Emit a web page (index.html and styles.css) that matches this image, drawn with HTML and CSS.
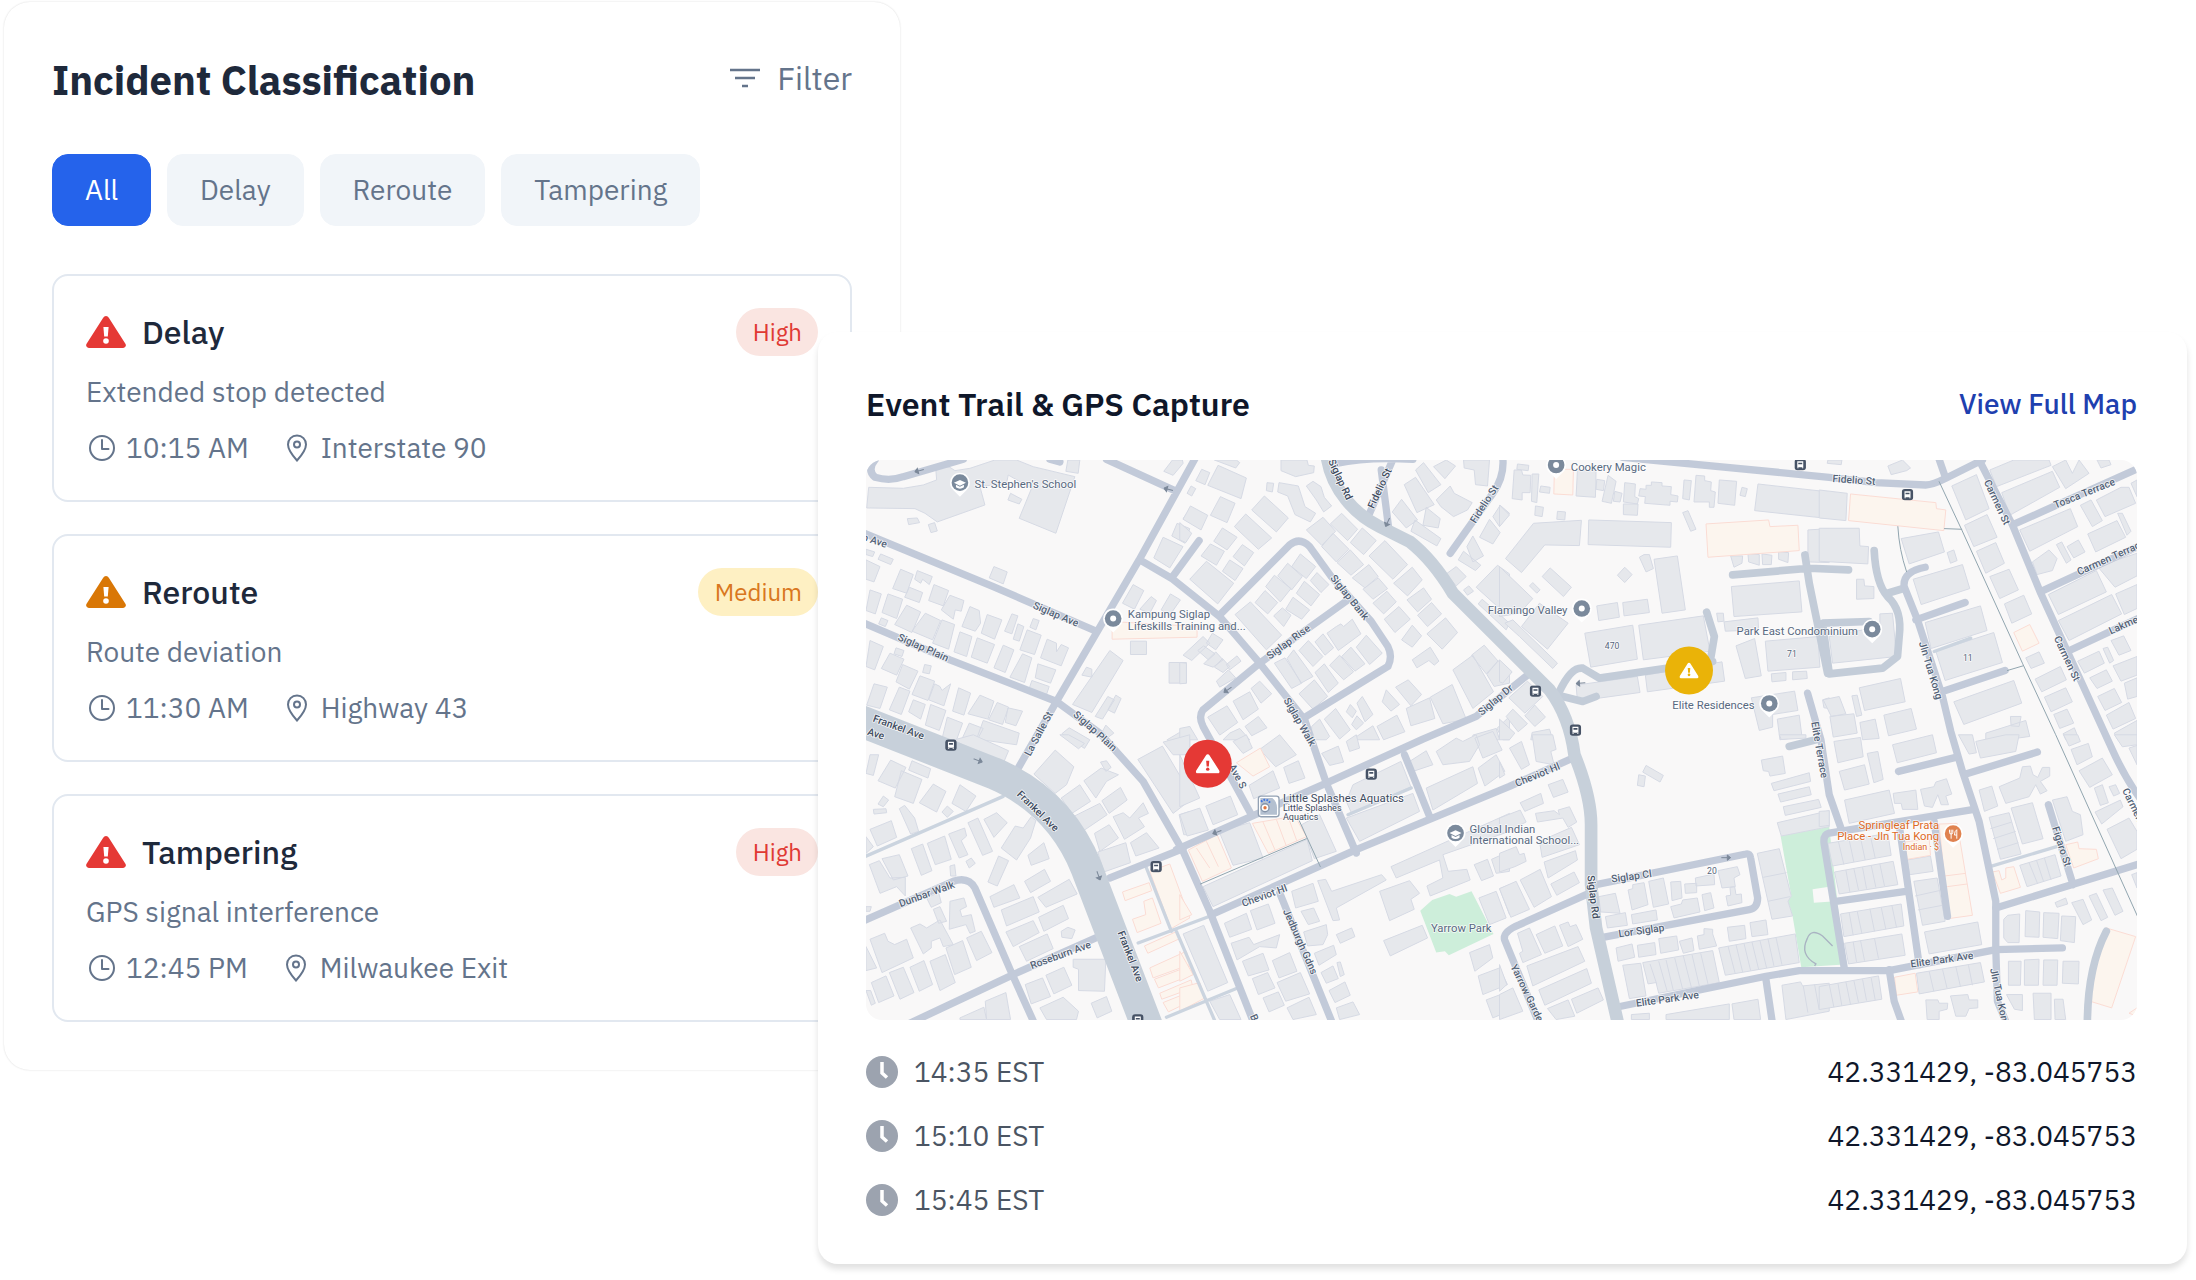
FILE: index.html
```html
<!DOCTYPE html>
<html lang="en">
<head>
    <meta charset="utf-8">
    <title>Incident Classification</title>
    <link rel="stylesheet" href="styles.css">
</head>
<body>
    <!-- shared icons -->
    <svg class="sprite" aria-hidden="true">
        <symbol id="warn" viewBox="0 0 40 32">
            <path fill="currentColor" d="M17.2 1.7a3.2 3.2 0 0 1 5.6 0l16.6 26a2.8 2.8 0 0 1-2.400 4.300H3a2.800 2.800 0 0 1-2.400-4.300z"/>
            <path class="warn-mark" d="M17.400 11h5.200l-.8 9.500h-3.600z"/>
            <circle class="warn-mark" cx="20" cy="25" r="2.800"/>
        </symbol>
        <symbol id="clock" viewBox="0 0 32 32">
            <circle cx="16" cy="16" r="12" fill="none" stroke="currentColor" stroke-width="2"/>
            <path d="M16 8v9h6.500" fill="none" stroke="currentColor" stroke-width="2" stroke-linecap="round" stroke-linejoin="round"/>
        </symbol>
        <symbol id="place" viewBox="0 0 32 32">
            <path d="M16 3.500c-5.200 0-9 4-9 9C7 18.500 16 28.500 16 28.500s9-10 9-16c0-5-3.800-9-9-9z" fill="none" stroke="currentColor" stroke-width="2"/>
            <circle cx="16" cy="12.500" r="3" fill="none" stroke="currentColor" stroke-width="2"/>
        </symbol>
        <symbol id="clock-solid" viewBox="0 0 32 32">
            <circle cx="16" cy="16" r="16" fill="currentColor"/>
            <path d="M16 6v11l5 4.500" fill="none" stroke="#fff" stroke-width="3.500"/>
        </symbol>
        <symbol id="pin" viewBox="-36 -36 72 84">
            <path d="M0 42 L-18 24A30 30 0 1 1 18 24z" fill="#fff"/>
            <circle r="25" fill="currentColor"/>
        </symbol>
        <symbol id="bus" viewBox="-18 -18 36 36">
            <rect x="-17" y="-17" width="34" height="34" rx="9" fill="#475366"/>
            <path d="M-9 -10h18v18h-18z" fill="#fff"/>
            <path d="M-6 -6h12v5h-12zM-9 8h4v4h-4zM5 8h4v4h-4z" fill="#475366"/>
            <path d="M-9 8h4v3h-4zM5 8h4v3h-4z" fill="#fff"/>
        </symbol>
        <symbol id="arrow" viewBox="-15 -12 30 24">
            <path d="M-14 0H4V-8L14 0 4 8V0" fill="#7b8899" stroke="#7b8899" stroke-width="3"/>
        </symbol>
    </svg>

    <main class="board">
        <section class="panel incidents">
            <header class="incidents-header">
                <h1>Incident Classification</h1>
                <button type="button" class="filter">
                    <svg class="icon" viewBox="0 0 32 32" aria-hidden="true"><path d="M1 8h30M6 16h20M13 24h6" fill="none" stroke="currentColor" stroke-width="2.500"/></svg>
                    Filter
                </button>
            </header>

            <nav class="tabs">
                <button type="button" class="tab active">All</button>
                <button type="button" class="tab">Delay</button>
                <button type="button" class="tab">Reroute</button>
                <button type="button" class="tab">Tampering</button>
            </nav>

            <div class="incident-list">
                <article class="incident">
                    <div class="incident-top">
                        <svg class="warn high-icon" aria-hidden="true"><use href="#warn"/></svg>
                        <h2>Delay</h2>
                        <span class="badge high">High</span>
                    </div>
                    <p>Extended stop detected</p>
                    <div class="meta">
                        <span><svg class="icon" aria-hidden="true"><use href="#clock"/></svg>10:15 AM</span>
                        <span><svg class="icon" aria-hidden="true"><use href="#place"/></svg>Interstate 90</span>
                    </div>
                </article>
                <article class="incident">
                    <div class="incident-top">
                        <svg class="warn medium-icon" aria-hidden="true"><use href="#warn"/></svg>
                        <h2>Reroute</h2>
                        <span class="badge medium">Medium</span>
                    </div>
                    <p>Route deviation</p>
                    <div class="meta">
                        <span><svg class="icon" aria-hidden="true"><use href="#clock"/></svg>11:30 AM</span>
                        <span><svg class="icon" aria-hidden="true"><use href="#place"/></svg>Highway 43</span>
                    </div>
                </article>
                <article class="incident">
                    <div class="incident-top">
                        <svg class="warn high-icon" aria-hidden="true"><use href="#warn"/></svg>
                        <h2>Tampering</h2>
                        <span class="badge high">High</span>
                    </div>
                    <p>GPS signal interference</p>
                    <div class="meta">
                        <span><svg class="icon" aria-hidden="true"><use href="#clock"/></svg>12:45 PM</span>
                        <span><svg class="icon" aria-hidden="true"><use href="#place"/></svg>Milwaukee Exit</span>
                    </div>
                </article>
            </div>
        </section>

        <section class="panel trail">
            <header class="trail-header">
                <h2>Event Trail &amp; GPS Capture</h2>
                <a href="#map">View Full Map</a>
            </header>

            <svg id="map" class="map" viewBox="0 0 3816 1680" role="img" aria-label="Map of the event trail">
                <!-- parks -->
                <g class="park">
                    <path transform="translate(942 825)" d="M722 528 758 496 810 478 830 486 876 470 942 598 808 662 796 650 770 654z"/>
                    <path transform="translate(1902 825)" d="M844 304 990 276 1035 690 906 698 880 545 866 500 876 484z"/>
                    <path class="ground" transform="translate(1902 825)" d="M940 464 1000 455 1010 500 944 504z"/>
                    <path class="trail-line" transform="translate(1902 825)" d="M1000 634 970 604Q935 580 924 612Q900 660 950 688L946 694"/>
                </g>

                <!-- buildings, one path per map tile -->
                <g class="building">
                    <path transform="translate(-18 -30)" d="M26 112 130 115 190 105 230 90 228 62 245 48 270 52 285 62 330 55 405 30 470 30 520 50 645 80 588 250 478 205 515 115 445 75 440 100 360 110 375 165 232 216 195 190 165 176 20 174zM142 206 172 204 179 218 146 224zM205 224 224 218 232 243 213 248zM452 130 486 148 478 162 444 150zM624 30 660 30 655 70 618 64zM402 350 442 366 430 402 388 384zM122 358 160 374 140 430 98 416zM172 362 217 380 208 404 188 388 182 400 164 388zM148 412 188 428 178 458 134 442zM222 404 266 422 250 468 206 452zM270 436 312 452 304 484 286 480 280 508 244 480zM84 432 128 448 110 506 66 488zM140 466 182 486 156 548 104 524zM196 490 242 512 218 570 156 544zM246 510 284 524 266 598 218 580zM330 470 358 482 362 520 346 544 306 530zM382 494 426 510 404 568 364 550zM456 492 474 498 456 552 434 544zM474 522 492 530 478 574 460 568zM300 546 336 560 320 620 282 606zM352 564 404 584 382 640 334 622zM430 586 462 600 436 668 402 654zM488 612 516 624 494 698 450 682zM502 540 544 556 524 614 480 600zM520 506 538 512 528 540 510 532zM562 568 590 580 590 606 604 584 626 594 604 648 542 624zM534 642 588 660 572 700 526 684zM516 692 568 710 560 734 508 716zM30 572 70 590 44 660 18 650zM90 610 132 628 110 676 64 656zM108 594 132 602 126 620 102 612zM128 644 174 664 148 718 108 696zM194 644 214 648 208 672 188 668zM180 678 224 694 204 752 156 734zM224 702 240 710 246 722 272 702 252 768 206 750zM118 712 150 724 124 794 88 780zM42 702 82 712 60 776 20 766zM296 714 332 730 312 796 278 784zM360 736 402 754 384 808 324 792zM412 758 446 772 428 824 386 810zM444 774 488 784 468 828 436 818zM160 750 196 764 182 808 146 786zM212 764 258 782 238 842 196 826zM262 802 308 820 290 870 246 868zM370 812 478 850 470 885 350 868zM328 820 370 836 352 870 306 868zM18 298 44 306 38 320 18 314zM62 312 100 328 92 344 54 328zM18 330 60 350 42 396 18 388zM30 420 64 432 46 492 18 482zM64 504 84 512 76 530 56 522zM952 220 990 236 976 280 936 258zM910 262 970 290 930 354 882 324zM990 178 970 206 990 216zM820 404 852 422 824 478 788 460zM874 440 890 452 870 490 840 478zM932 432 962 450 930 496 904 480zM938 30 968 30 970 40 940 76 912 64zM812 574 860 574 860 614 812 614zM928 638 980 638 980 700 928 700zM750 602 790 632 696 788 638 764zM680 652 696 658 696 682 666 676zM744 740 764 750 728 808 706 800zM768 736 784 746 764 790 744 780zM628 834 690 870 674 896 606 852zM990 830 922 870 940 890 990 890zM738 826 762 850 746 862 726 848z"/>
                    <path transform="translate(942 -30)" d="M115 46 200 84 184 146 84 106zM66 58 90 68 76 104 48 92zM34 108 48 116 36 138 22 130zM104 30 170 30 180 38 168 54zM304 30 382 30 386 46 404 48 402 68 348 80 304 62zM262 98 282 100 278 126 260 122zM122 140 166 160 142 218 92 196zM32 168 84 196 64 240 10 208zM254 138 326 204 290 246 216 180zM198 192 276 264 236 298 164 230zM298 98 356 108 376 170 408 190 392 216 346 194 324 138 294 126zM400 94 424 110 434 142 456 168 432 186 410 150 380 108zM430 202 468 244 426 286 380 240zM486 190 534 238 504 272 452 222zM548 234 590 272 552 314 512 278zM460 250 508 298 470 336 426 290zM512 300 552 344 514 376 472 338zM616 272 684 344 640 388 568 318zM568 344 596 380 556 414 518 384zM596 384 624 416 580 448 550 418zM698 352 728 390 684 438 642 400zM622 424 650 456 612 492 580 460zM732 414 756 448 714 486 682 450zM658 470 692 508 646 548 614 508zM756 458 786 492 744 530 714 496zM798 504 834 548 788 598 742 552zM698 526 726 558 698 592 666 570zM752 592 778 634 764 646 748 632 712 654 698 630zM128 234 172 262 142 300 102 274zM92 282 134 304 110 346 64 318zM188 284 222 308 194 348 160 320zM150 330 190 356 166 392 128 364zM80 334 162 400 114 462 30 388zM0 218 36 250 18 278 0 270zM362 312 408 350 380 386 336 350zM324 340 368 380 336 420 294 378zM284 376 334 416 302 456 258 410zM412 368 448 404 424 428 392 392zM374 394 420 434 394 468 350 430zM256 422 294 458 264 492 226 458zM340 442 390 480 366 508 318 478zM308 474 334 496 312 530 282 498zM212 456 306 556 260 600 166 494zM518 508 544 552 476 602 442 550 470 530 484 522 492 530zM430 552 462 594 436 616 406 576zM386 572 430 620 400 650 358 602zM560 556 608 610 570 644 530 592zM514 592 556 642 526 664 486 620zM342 600 400 680 364 700 322 626zM316 624 366 700 336 716 284 640zM480 616 522 666 492 690 450 646zM434 642 476 700 446 728 406 668zM404 690 444 740 400 778 358 732zM70 560 90 580 36 632 10 616zM98 550 130 570 108 600 80 580zM72 588 106 612 86 630 54 602zM108 606 130 630 100 652 72 642zM128 626 150 650 130 668 104 652zM172 618 184 634 150 660 140 644zM146 660 168 684 120 712 110 694zM240 694 276 732 244 760 214 716zM210 726 236 778 190 810 160 754zM142 768 174 818 120 856 84 802zM236 800 262 834 216 858 196 830zM0 638 20 640 20 700 0 702zM0 836 30 830 54 870 0 870zM150 850 180 836 210 870 130 870zM620 720 660 764 634 784 608 756zM686 690 726 734 694 768 648 712zM750 744 766 806 694 828 680 776zM818 704 860 808 790 822 752 742zM880 616 942 726 880 776 820 660zM914 586 956 634 920 672 876 616zM956 632 990 670 990 700 944 710 922 674zM548 740 580 794 556 816 532 760zM512 764 530 784 518 804 500 786zM532 798 552 820 530 840 516 824zM468 776 512 840 480 868 434 808zM420 808 450 860 440 870 396 870 396 830zM580 828 600 870 516 870zM652 796 676 846 612 870 592 830zM952 836 990 800 990 870 970 870zM880 856 950 836 960 870 880 870zM732 38 784 104 746 128 708 60zM708 82 764 164 712 188 674 104zM666 148 714 210 680 234 638 186zM800 30 828 48 796 86 762 50zM852 30 930 30 924 108 888 104 884 60 854 54zM812 108 824 130 878 158 864 180 822 200 784 170 770 150zM740 172 782 206 776 234 730 226zM706 210 784 266 772 288 694 244zM962 166 990 190 960 230 940 200zM930 208 962 248 940 282 900 262zM880 258 912 318 880 336 862 290zM852 304 904 346 888 362 836 330zM830 350 860 380 830 408 800 372zM868 408 882 424 864 436 852 420zM954 346 990 372 990 460 954 470 890 412zM908 448 990 520 980 540 896 462z"/>
                    <path transform="translate(1902 -30)" d="M44 60 66 60 70 75 94 76 92 128 68 128 68 150 38 146zM54 42 88 46 86 62 52 58zM98 72 118 72 112 158 96 154zM124 108 152 112 150 130 120 126zM234 60 290 62 288 142 230 138zM292 88 316 92 312 122 290 118zM326 76 350 94 336 160 308 154zM346 124 368 130 362 156 342 154zM376 98 408 102 406 140 418 146 414 162 372 156zM372 162 416 162 414 196 372 194zM108 168 132 172 128 200 106 196zM174 184 198 186 196 210 172 208zM0 165 30 195 0 230zM422 116 440 118 440 106 456 106 456 96 488 98 488 108 516 110 514 134 536 138 534 156 512 154 512 166 436 160 438 140 418 138zM554 90 576 92 570 150 550 146zM590 76 616 78 616 92 636 96 634 122 648 126 644 172 630 172 630 156 584 156zM660 90 712 94 706 166 656 160zM728 112 744 116 738 140 722 136zM776 102 990 126 990 206 766 182zM102 220 246 211 240 287 136 285 66 368 18 326zM268 210 516 218 514 292 266 284zM566 182 590 238 574 244 550 188zM926 240 990 236 990 338 926 336zM0 350 100 446 60 490 0 500zM434 314 450 314 462 356 440 366 420 322zM376 352 398 374 376 398 354 376zM464 328 534 318 558 480 488 490zM152 354 216 412 192 440 128 380zM100 398 122 420 112 430 90 408zM292 468 354 458 360 502 298 512zM370 458 444 448 450 488 374 498zM120 460 206 520 144 598 66 530zM16 520 40 510 174 640 160 656 60 560zM256 550 400 526 414 628 274 652zM418 526 612 498 632 604 432 630zM652 490 672 490 674 514 656 516zM674 516 776 504 778 540 678 544zM696 410 900 393 908 486 704 500zM230 706 414 680 422 728 234 754zM438 676 668 636 676 694 444 726zM710 588 766 566 786 678 738 686zM798 574 956 560 962 652 806 664zM816 672 860 668 860 692 818 696zM880 666 922 664 924 686 880 690zM756 744 886 724 896 782 820 794 820 832 780 842zM834 808 900 796 908 860 842 870zM970 750 990 744 990 776 974 774zM84 694 130 740 76 790 28 744zM0 630 38 666 10 700 0 696zM106 766 138 802 106 830 76 798zM40 778 84 822 56 846 20 800zM0 808 46 850 30 870 0 870zM98 848 150 838 160 870 94 870zM694 318 730 318 728 340 704 352zM746 312 780 314 780 346 748 336zM788 312 818 316 816 344 790 344zM838 306 868 308 866 338 838 328z"/>
                    <path transform="translate(2862 -30)" d="M26 30 68 30 66 44 24 40zM250 30 274 54 262 62 216 74 206 48zM0 120 84 130 80 212 0 204zM0 235 120 235 122 288 148 290 146 342 0 334zM112 388 134 388 136 408 164 410 164 446 112 448zM246 266 358 246 376 306 270 342zM384 308 404 300 414 332 394 340zM282 388 430 344 452 416 306 464zM318 518 484 468 504 542 336 596zM350 604 524 548 550 638 378 692zM404 756 584 692 608 760 434 824zM182 492 220 490 232 620 40 640 30 560 182 530zM120 714 244 686 258 756 136 782zM194 796 276 776 292 838 208 858zM12 750 60 740 80 792 36 800zM98 738 114 736 128 796 112 800zM32 800 104 792 114 850 42 862zM122 818 168 808 180 866 130 870zM398 108 472 74 510 176 440 210zM436 226 504 194 534 262 464 290zM472 304 530 278 556 340 500 370zM512 380 570 358 598 420 542 446zM556 462 614 436 638 492 578 520zM620 624 660 606 676 640 636 656zM648 688 724 650 742 690 668 726zM676 742 740 714 760 756 696 786zM704 794 744 778 764 820 722 836zM732 852 766 834 780 870 740 870zM512 60 584 30 690 30 696 46 532 110zM548 128 700 64 722 112 572 196zM700 50 740 30 760 70 780 30 810 70 740 116zM834 30 870 30 876 44 846 54zM602 240 754 176 776 230 632 304zM784 166 816 150 850 212 820 230zM832 150 906 112 930 112 950 160 858 200zM806 252 894 212 920 262 830 306zM954 90 936 100 954 140zM896 190 910 190 936 244 924 256zM640 336 690 300 714 326 700 362 654 374zM712 284 728 276 756 330 742 340zM744 290 778 270 798 306 764 324zM688 434 832 362 862 426 718 494zM836 350 954 310 954 378 888 412zM718 512 878 434 908 492 750 572zM890 432 954 404 954 476 916 494zM776 634 840 604 856 640 796 670zM852 596 866 592 884 632 872 640zM876 572 914 558 936 602 900 616zM812 684 862 660 880 694 834 716zM882 648 954 620 954 676 906 694zM836 740 886 716 908 758 858 782zM916 700 954 684 954 740 926 748zM862 796 930 758 950 806 882 838zM886 850 954 812 954 870 896 870zM574 800 606 800 600 830 576 828zM500 850 620 812 632 860 560 870 500 870z"/>
                    <path transform="translate(-18 825)" d="M30 60 56 60 40 122 18 116zM92 76 138 98 106 160 54 138zM156 78 212 102 204 130 146 106zM124 108 186 134 160 206 104 186zM220 148 258 170 230 232 178 204zM300 150 348 184 318 230 276 206zM70 184 86 196 70 216 54 208zM40 224 78 222 80 234 42 238zM134 212 164 250 176 290 152 298 118 222zM262 214 280 230 262 248 246 232zM30 284 94 258 110 308 52 334zM18 306 40 336 18 356zM154 342 188 328 216 408 184 422zM202 326 254 304 274 374 226 390zM266 298 314 280 320 304 304 318 324 360 298 370zM324 264 354 250 398 350 368 362zM372 254 410 234 442 264 402 308zM514 246 528 258 512 310 470 376 424 340 466 274 490 280zM504 362 552 324 568 372 514 392zM416 364 446 378 412 454 384 442zM318 380 334 370 346 386 328 400zM28 390 58 378 90 430 136 428 136 484 110 456 60 476zM66 372 118 360 144 424 100 436zM270 394 284 390 288 424 272 424zM494 440 554 404 572 440 512 474zM390 486 462 450 480 490 402 518zM534 488 628 434 652 478 558 518zM424 526 520 486 538 532 440 574zM536 548 610 512 626 552 552 590zM438 592 520 558 538 594 460 636zM478 636 562 598 580 642 500 680zM604 590 624 578 646 586 636 612 606 608zM640 674 738 674 734 770 656 768 656 704 640 698zM496 750 548 730 572 786 514 808zM558 722 612 698 636 752 582 778zM694 806 740 786 756 830 712 850zM540 820 610 788 656 830 650 855 560 855zM300 850 372 818 380 855 300 855zM376 800 438 774 452 855 380 855zM152 580 180 568 200 580 240 556 280 630 250 636 240 610 214 620 214 640 190 658zM220 524 240 516 260 560 236 566zM270 500 312 490 320 516 300 526 306 546 334 540 346 590 330 596 318 570 268 584zM200 490 236 474 244 504 214 518zM30 614 74 596 84 620 104 630 140 614 160 670 66 714zM18 636 50 700 18 708zM320 610 364 590 396 654 350 678zM258 640 308 618 334 698 284 720zM210 680 256 660 286 744 240 768zM150 698 192 678 218 750 178 770zM88 714 130 698 162 774 120 794zM34 744 78 724 102 784 56 804zM18 768 32 768 46 806 34 812zM586 46 642 96 620 150 586 176 522 118zM604 190 660 150 692 200 636 236zM672 138 724 100 776 120 740 140 708 190zM722 82 740 78 754 98 738 110zM726 198 782 158 802 196 748 236zM640 246 720 206 742 240 668 290zM760 246 790 234 810 250 850 204 866 236 836 250 854 276 794 314zM704 296 748 270 776 310 720 350zM812 324 860 294 898 340 828 364zM714 352 798 324 812 384 732 412zM834 74 908 34 1000 190 940 236zM910 22 990 0 990 60 940 60zM600 0 626 0 674 26 656 42zM958 240 990 230 990 300 972 300zM340 0 446 48 430 86 280 16zM18 516 34 516 30 530 18 530z"/>
                    <path transform="translate(942 825)" d="M240 44 300 0 350 60 288 96zM312 98 356 78 376 130 328 146zM208 152 280 108 300 160 222 192zM78 214 152 184 174 240 100 270zM0 240 60 220 86 286 22 304zM0 60 60 190 0 216zM160 20 200 0 218 40 190 56zM426 56 476 34 492 82 450 92zM500 20 530 0 540 40 510 50zM520 150 664 80 694 156 516 236 500 200zM500 250 700 176 720 230 540 320zM366 270 420 240 470 350 404 372zM118 290 210 264 250 370 160 392zM70 456 382 314 398 378 100 516zM634 396 990 236 990 290 790 360 806 410 862 404 872 436 752 484 742 454 790 430 780 376 650 430zM336 470 400 446 416 500 348 520zM414 438 438 434 456 470 606 420 620 436 470 520 480 556 460 558zM600 470 690 438 720 476 694 494 704 524 630 558zM134 566 200 536 216 584 150 608zM212 528 266 508 286 566 232 586zM364 530 402 520 420 560 386 570zM372 592 440 570 444 600 430 630 384 634zM470 600 516 580 526 606 482 626zM612 618 728 572 744 610 632 664zM154 626 208 608 222 630 300 600 290 640 240 636 172 676zM188 680 250 656 268 706 206 724zM278 678 330 654 352 710 298 730zM404 656 462 632 470 660 418 692zM218 732 264 714 286 760 236 780zM424 714 460 694 476 732 440 746zM472 684 482 682 494 720 482 726zM292 744 362 714 390 778 318 800zM448 768 496 742 512 782 466 804zM250 790 296 772 314 812 268 832zM322 820 388 788 410 840 340 855zM470 820 520 802 540 840 480 855zM10 598 72 572 144 744 84 770zM90 800 150 780 184 855 120 855zM870 654 930 630 940 670 886 710zM896 724 960 700 984 750 910 780zM920 796 990 770 990 830 940 850zM898 490 950 470 980 550 930 570zM884 390 924 374 942 424 906 438zM936 374 990 350 990 410 950 416zM960 462 990 450 990 540zM690 80 740 48 760 90 700 110zM770 50 830 10 850 20 890 0 900 30 870 80 790 90zM740 160 880 96 894 146 760 226zM886 10 940 -10 968 46 910 70zM896 100 950 60 976 110 916 154z"/>
                    <path transform="translate(1902 825)" d="M98 0 160 0 170 44 154 50 164 90 110 80zM30 40 66 20 90 90 66 104zM0 80 16 120 0 130zM440 92 492 122 482 142 430 112zM418 120 438 124 434 156 414 152zM146 150 190 134 206 172 162 188zM62 204 124 176 132 206 76 230zM108 236 164 228 180 240 176 226 210 216 232 262 206 278 190 250 114 262zM0 250 62 226 80 262 0 300zM120 320 216 278 240 330 128 368zM134 382 228 348 234 376 146 430zM0 356 50 336 60 360 74 356 80 380 46 396 0 412zM154 448 224 412 240 444 172 482zM62 436 122 404 156 486 104 518zM0 462 50 440 90 524 34 548zM54 596 90 580 126 660 70 684 60 656 70 650zM110 600 166 574 190 634 136 656zM180 572 206 562 212 576 230 570 250 614 206 636zM82 694 236 636 256 680 100 754zM118 766 262 702 276 746 136 812zM144 822 206 796 226 845 170 855zM216 794 296 760 312 796 232 836zM0 690 22 750 0 770zM0 780 40 760 70 830 0 855zM298 486 348 476 362 536 304 532zM318 546 378 534 384 572 324 580zM386 466 400 462 400 450 434 444 446 510 398 526zM448 440 492 430 508 508 462 518zM514 442 544 440 548 490 518 498zM556 448 592 446 592 474 558 476zM588 430 644 418 646 450 590 454zM656 408 714 396 722 420 704 430 708 456 668 460zM680 484 694 482 692 458 706 456 710 480 726 478 728 504 686 514zM608 480 634 474 644 520 616 528zM514 516 546 508 550 496 594 490 602 532 524 550zM396 540 470 526 474 556 400 568zM350 640 398 628 406 668 356 680zM414 632 466 624 470 660 418 668zM478 612 532 604 538 646 484 656zM540 620 578 610 584 648 552 656zM594 604 614 600 614 582 640 584 640 598 652 634 600 644zM684 578 736 572 740 612 690 620zM752 564 800 556 806 600 758 606zM370 692 424 686 440 784 390 792zM430 684 640 648 660 744 478 776 470 744 446 748zM658 640 888 598 900 684 678 722zM774 356 840 342 876 484 866 500 880 544 818 554zM786 76 850 64 858 116 812 124 808 110 792 108zM816 146 930 114 934 140 824 168zM836 178 930 156 936 180 844 202zM852 216 958 194 966 218 858 242zM834 264 990 228 990 276 846 304zM848 752 904 742 910 754 990 746 990 830 860 855zM500 840 690 808 690 855 500 855zM698 808 776 794 784 855 704 855zM396 840 450 836 450 855 396 855zM840 0 920 0 920 10 846 14zM452 688l20 60M478 680l26 92M500 676l22 92M526 670l24 94M552 664l24 94M578 660l22 94M604 656l22 92M686 634l22 84M710 630l20 82M734 626l20 82M758 622l20 82M782 618l20 82M806 612l18 82M830 608l18 82M792 428l70-14M806 500l66-14M912 754l14 80M946 750l14 76"/>
                    <path transform="translate(2862 825)" d="M44 20 124 8 132 66 56 84zM60 110 136 90 150 148 76 166zM144 56 176 50 192 134 164 144zM220 30 340 0 352 54 234 84zM76 196 210 166 226 236 90 266zM222 176 290 166 296 224 250 224 246 206 226 206zM304 164 344 156 350 142 382 132 398 178 380 184 388 210 366 210 356 180 340 218 316 214zM0 230 30 228 30 272 0 276zM26 326 206 296 216 362 40 394zM46 412 222 380 236 450 60 478zM64 538 246 508 254 574 74 606zM76 626 248 598 258 662 88 688zM264 376 334 364 342 410 272 420zM284 440 354 430 378 560 310 572zM316 592 476 562 488 630 330 658zM292 716 484 684 496 742 300 778zM0 756 178 724 188 794 0 825zM480 166 518 154 536 214 496 230zM540 156 602 130 610 96 634 94 642 120 656 128 670 98 692 98 692 124 664 140 684 168 664 178 650 150 630 186 560 206zM576 220 640 204 672 312 610 328zM510 248 570 234 606 358 544 374zM602 392 708 360 726 424 624 456zM700 196 744 186 760 230 784 240 792 300 740 320zM470 20 560 0 600 0 590 50 484 70zM418 0 460 0 472 54 450 58zM756 44 808 26 820 66 774 90zM780 108 850 70 880 120 812 158zM826 160 850 150 868 204 844 212zM870 156 890 150 902 176 884 184zM828 232 904 196 912 216 848 268zM864 284 930 250 954 290 954 344 906 372zM886 0 954 0 954 30 910 36zM938 420 954 414 954 460zM930 40 954 32 954 90zM734 0 776 0 784 20 750 34zM566 542 602 538 600 624 566 624 554 610 554 554zM620 528 662 532 660 608 618 606zM674 534 720 536 716 612 672 608zM728 544 770 546 766 624 724 618zM708 504 740 490 746 508 714 518zM758 504 792 494 818 556 792 570zM810 484 832 476 866 548 846 558zM852 466 880 460 912 530 888 542zM568 680 606 680 604 752 568 752zM616 676 660 674 658 752 616 752zM674 676 716 676 714 752 672 752zM732 680 780 680 778 748 730 746zM562 780 610 780 610 828 586 824zM642 776 696 776 696 855 646 855zM706 794 732 794 740 855 708 855zM320 796 356 796 360 806 386 806 384 824 360 830 360 855 324 855zM394 784 446 780 450 796 476 796 476 820 450 822 440 845 410 845zM58 322l16 68M90 316l14 66M124 310l14 66M154 306l14 64M80 406l12 66M104 402l14 64M130 398l12 64M156 392l14 66M182 388l14 66M90 534l12 68M114 530l14 66M152 522l14 68M186 518l14 66M218 512l14 66M102 622l10 60M124 618l12 60M166 612l12 60M288 484l72-16M296 526l74-14M330 710l14 60M370 704l14 58M410 696l14 60M448 692l12 60M514 282l64-20M522 312l68-22M534 344l64-20M630 384l26 64M652 376l22 66M676 370l20 66M30 750l14 68M56 746l12 68M80 742l14 68M104 738l14 66M130 734l12 64M156 730l12 66"/>
                </g>

                <!-- shops and schools -->
                <g class="shop">
                    <path transform="translate(-18 -30)" d="M757 515 1012 530 1012 562 757 568z"/>
                    <path transform="translate(1902 -30)" d="M165 58 222 58 220 135 163 132zM620 222 808 210 812 230 896 226 900 302 626 322z"/>
                    <path transform="translate(2862 -30)" d="M94 132 350 158 352 176 380 180 374 242 88 212zM584 548 632 524 660 580 610 604z"/>
                    <path transform="translate(-18 825)" d="M788 472 868 444 876 468 796 498zM852 500 878 490 904 566 832 594 818 554 858 540zM870 410 930 388 990 550 934 582zM854 634 952 590 960 612 864 656zM870 700 980 650 990 690 880 730zM884 734 990 694 1000 720 896 760zM900 776 994 736 1000 760 906 794zM910 804 1000 768 1012 790 926 832z"/>
                    <path transform="translate(942 825)" d="M170 84 242 40 270 96 220 124zM26 346 112 300 155 400 68 440zM80 320 116 396M50 340 90 400M218 266 346 244 380 306 266 356zM250 262l36 84M290 254l30 80M326 248l26 72M0 480 36 540 0 556zM0 650 40 720 0 740zM0 760 60 744 76 790 0 830z"/>
                    <path transform="translate(2862 825)" d="M360 268 414 266 460 542 388 552zM376 424l64-8M384 456l60-8M258 322 330 312 334 362 264 374zM740 330 776 322 780 342 832 344 838 372 764 400zM520 412 540 408 548 436 560 430 560 400 584 396 604 458 544 476zM862 580 950 606 878 820 800 796zM226 728 288 716 296 772 232 782zM954 820 930 836 954 845z"/>
                </g>

                <!-- narrow lanes -->
                <g class="lane">
                    <path transform="translate(2862 -30)" d="M345 605 455 565"/>
                    <path transform="translate(-18 825)" d="M10 368 430 185M860 400 935 590M835 625 1050 545M950 590 1070 870M920 848 1130 762"/>
                    <path transform="translate(942 825)" d="M505 240 695 160"/>
                    <path transform="translate(2862 825)" d="M515 395 715 335"/>
                </g>

                <!-- driveways -->
                <g class="drive">
                    <path transform="translate(1902 -30)" d="M700 375 930 355 1048 360M917 315 930 400 985 670M622 487 645 560 635 620M180 725Q215 650 250 655L300 685 640 635M190 740 250 755 290 740M870 890 950 870"/>
                    <path transform="translate(2862 -30)" d="M165 302Q170 400 205 440Q250 480 240 560L235 620 190 655 30 672 10 520 150 515M205 430 255 415"/>
                    <path transform="translate(2862 825)" d="M862 590Q805 700 805 870"/>
                </g>

                <!-- streets -->
                <g class="street">
                    <path transform="translate(-18 -30)" d="M0 245 400 410 712 545M0 515 270 630 590 755 720 850 850 995 970 1205 1050 1385 1190 1740M1020 0 838 330 590 755 475 955M740 28 945 122M45 30Q20 60 45 82Q90 95 130 80L310 28M840 330 935 385 1080 500 1200 640 1335 810 1400 1000 1490 1210M935 385 1018 272M570 28 600 36"/>
                    <path transform="translate(942 -30)" d="M120 495 330 285Q360 260 390 290L455 380 575 515 625 590Q640 620 625 650L380 800M505 450 240 640 70 780Q55 800 70 830L215 1095M640 28 570 190M605 60 628 240M470 40Q560 20 700 28M970 25Q975 80 940 130L812 310M-10 1200 440 1000 730 868 890 800 1045 675"/>
                    <path transform="translate(1902 -30)" d="M370 22 990 82 1130 98 1280 105Q1300 105 1340 85L1450 30M925 730 965 870 990 1035 1025 1135"/>
                    <path transform="translate(2862 -30)" d="M360 28 378 80M480 30 580 225 665 430 880 900Q930 1010 990 1080M580 225 970 50M665 425 970 284M745 605 970 500M318 352Q250 365 255 410L295 510 370 740 395 845 430 965 480 1115 530 1355 530 1495 535 1655 570 1740M290 510 438 458M370 725 558 662"/>
                    <path transform="translate(-18 825)" d="M0 563 280 440Q325 425 345 460L455 715 525 870M120 880 460 720 730 600M750 430 970 342"/>
                    <path transform="translate(942 825)" d="M95 540 530 345 990 155 1180 70M675 60 750 245M300 475 460 870"/>
                    <path transform="translate(1902 825)" d="M260 480 60 570Q10 590 15 615L50 700 120 870M290 450 740 358Q752 355 754 370L775 490Q775 520 750 525L310 608M365 815 800 725 900 708 1170 708 1490 645 1690 640M800 735 820 870"/>
                    <path transform="translate(2862 825)" d="M460 225 30 295Q10 300 15 330L75 700M238 110 410 68M440 118 655 52M688 210 762 450M530 520 970 385M240 270 300 690M345 260 385 545M50 500 260 470M210 705 225 800 250 870"/>
                </g>

                <!-- main roads -->
                <path class="avenue" transform="translate(-18 825)" d="M-20 -50 400 115Q600 200 680 400L860 870"/>
                <path class="main-road" transform="translate(942 -30)" d="M440 10Q450 90 500 150Q540 200 600 230L690 275Q760 330 820 430L990 600 1110 720Q1170 800 1185 915Q1235 1040 1235 1125L1235 1305 1250 1435 1320 1740"/>
                <g class="boundary">
                    <path transform="translate(2862 -30)" d="M360 95 428 240 610 640 710 855 960 1410M376 236 428 238M236 230Q240 300 262 365M565 662 612 648"/>
                    <path transform="translate(942 825)" d="M62 448 380 312M355 250 422 396"/>
                </g>

                <!-- one-way arrows and bus stops -->
                <use href="#arrow" x="-15" y="-12" width="30" height="24" transform="translate(160 32) rotate(165)"/>
                <use href="#arrow" x="-15" y="-12" width="30" height="24" transform="translate(908 88) rotate(195)"/>
                <use href="#arrow" x="-15" y="-12" width="30" height="24" transform="translate(1086 690) rotate(145)"/>
                <use href="#arrow" x="-15" y="-12" width="30" height="24" transform="translate(1566 187) rotate(115)"/>
                <use href="#arrow" x="-15" y="-12" width="30" height="24" transform="translate(2146 670) rotate(175)"/>
                <use href="#arrow" x="-15" y="-12" width="30" height="24" transform="translate(336 902) rotate(20)"/>
                <use href="#arrow" x="-15" y="-12" width="30" height="24" transform="translate(698 1248) rotate(70)"/>
                <use href="#arrow" x="-15" y="-12" width="30" height="24" transform="translate(1054 1117) rotate(160)"/>
                <use href="#arrow" x="-15" y="-12" width="30" height="24" transform="translate(2582 1194)"/>
                <use href="#bus" x="2787" y="-4" width="36" height="36"/>
                <use href="#bus" x="3109" y="86" width="36" height="36"/>
                <use href="#bus" x="1992" y="676" width="36" height="36"/>
                <use href="#bus" x="2112" y="793" width="36" height="36"/>
                <use href="#bus" x="237" y="838" width="36" height="36"/>
                <use href="#bus" x="853" y="1203" width="36" height="36"/>
                <use href="#bus" x="1499" y="925" width="36" height="36"/>
                <use href="#bus" x="798" y="1663" width="36" height="36"/>

                <!-- street names -->
                <g class="street-name">
                    <text transform="translate(26 242) rotate(18)">p Ave</text>
                    <text transform="translate(570 463) rotate(23)">Siglap Ave</text>
                    <text transform="translate(172 563) rotate(24)">Siglap Plain</text>
                    <text transform="translate(688 814) rotate(42)">Siglap Plain</text>
                    <text transform="translate(518 822) rotate(-62)">La Salle St</text>
                    <text transform="translate(1452 412) rotate(51)">Siglap Bank</text>
                    <text transform="translate(1268 546) rotate(-36)">Siglap Rise</text>
                    <text transform="translate(1302 786) rotate(60)">Siglap Walk</text>
                    <text transform="translate(1116 950) rotate(62)">Ave S</text>
                    <text transform="translate(1856 132) rotate(-57)">Fidelio St</text>
                    <text transform="translate(1890 720) rotate(-40)">Siglap Dr</text>
                    <text transform="translate(2966 60) rotate(4)">Fidelio St</text>
                    <text transform="translate(3396 127) rotate(65)">Carmen St</text>
                    <text transform="translate(3658 100) rotate(-22)">Tosca Terrace</text>
                    <text transform="translate(3738 292) rotate(-24)">Carmen Terrace</text>
                    <text transform="translate(3606 596) rotate(65)">Carmen St</text>
                    <text transform="translate(3792 488) rotate(-24)">Lakme St</text>
                    <text transform="translate(3197 632) rotate(73)">Jln Tua Kong</text>
                    <text transform="translate(2863 870) rotate(80)">Elite Terrace</text>
                    <text transform="translate(182 1303) rotate(-20)">Dunbar Walk</text>
                    <text transform="translate(584 1486) rotate(-20)">Roseburn Ave</text>
                    <text transform="translate(1196 1308) rotate(-20)">Cheviot Hl</text>
                    <text transform="translate(1304 1446) rotate(66)">Jedburgh Gdns</text>
                    <text transform="translate(2016 945) rotate(-22)">Cheviot Hl</text>
                    <text transform="translate(2298 1250) rotate(-8)">Siglap Cl</text>
                    <text transform="translate(2328 1413) rotate(-8)">Lor Siglap</text>
                    <text transform="translate(2406 1618) rotate(-8)">Elite Park Ave</text>
                    <text transform="translate(1992 1615) rotate(64)">Yarrow Gardens</text>
                    <text transform="translate(3230 1500) rotate(-8)">Elite Park Ave</text>
                    <text transform="translate(3590 1160) rotate(72)">Figaro St</text>
                    <text transform="translate(3404 1614) rotate(78)">Jln Tua Kong</text>
                    <text transform="translate(3812 1052) rotate(64)">Carmen St</text>
                    <text transform="translate(1166 1674) rotate(66)">B</text>
                </g>
                <g class="street-name major">
                    <text transform="translate(98 802) rotate(20)">Frankel Ave</text>
                    <text transform="translate(30 822) rotate(18)">Ave</text>
                    <text transform="translate(516 1054) rotate(44)">Frankel Ave</text>
                    <text transform="translate(794 1490) rotate(69)">Frankel Ave</text>
                    <text transform="translate(1424 58) rotate(65)">Siglap Rd</text>
                    <text transform="translate(1542 85) rotate(-65)">Fidelio St</text>
                    <text transform="translate(2184 1312) rotate(83)">Siglap Rd</text>
                </g>
                <g class="house-no">
                    <text x="2240" y="558">470</text>
                    <text x="2780" y="582">71</text>
                    <text x="3308" y="593">11</text>
                    <text x="2540" y="1233">20</text>
                </g>

                <!-- places -->
                <g class="poi">
                    <use href="#pin" x="246" y="32" width="72" height="84"/>
                    <path d="M264 68 282 60 300 68 282 77zM270 74v8q12 8 24 0v-8l-12 6z" fill="#fff"/>
                    <text x="326" y="72">St. Stephen's School</text>
                    <use href="#pin" x="706" y="440" width="72" height="84"/>
                    <circle cx="742" cy="476" r="9" fill="#fff"/>
                    <text x="786" y="463">Kampung Siglap</text>
                    <text x="786" y="497">Lifeskills Training and...</text>
                    <use href="#pin" x="2036" y="-21" width="72" height="84"/>
                    <circle cx="2072" cy="15" r="9" fill="#fff"/>
                    <text x="2116" y="20">Cookery Magic</text>
                    <use href="#pin" x="2113" y="410" width="72" height="84"/>
                    <circle cx="2149" cy="446" r="9" fill="#fff"/>
                    <text x="2106" y="449" class="end">Flamingo Valley</text>
                    <use href="#pin" x="2985" y="472" width="72" height="84"/>
                    <circle cx="3021" cy="508" r="9" fill="#fff"/>
                    <text x="2978" y="514" class="end">Park East Condominium</text>
                    <use href="#pin" x="2676" y="695" width="72" height="84"/>
                    <circle cx="2712" cy="731" r="9" fill="#fff"/>
                    <text x="2668" y="736" class="end">Elite Residences</text>
                    <use href="#pin" x="1734" y="1084" width="72" height="84"/>
                    <path d="M1752 1120 1770 1112 1788 1120 1770 1129zM1758 1126v8q12 8 24 0v-8l-12 6z" fill="#fff"/>
                    <text x="1812" y="1108">Global Indian</text>
                    <text x="1812" y="1142">International School...</text>
                    <text x="1696" y="1405">Yarrow Park</text>
                </g>
                <g class="poi dark">
                    <rect x="1178" y="1009" width="62" height="62" rx="8" fill="#fff" stroke="#93a1b3" stroke-width="4"/>
                    <path d="M1184 1015h36q16 12 14 36v14h-50z" fill="#b4c0d0"/>
                    <path d="M1186 1026Q1200 1012 1214 1030" fill="none" stroke="#3f74e0" stroke-width="6" stroke-dasharray="5 4"/>
                    <circle cx="1198" cy="1044" r="12" fill="#fff" stroke="#8493a8" stroke-width="4"/>
                    <circle cx="1198" cy="1044" r="5" fill="#e0763f"/>
                    <text x="1252" y="1014">Little Splashes Aquatics</text>
                    <text x="1252" y="1044" class="small">Little Splashes</text>
                    <text x="1252" y="1071" class="small">Aquatics</text>
                </g>
                <g class="poi food">
                    <use href="#pin" x="3228" y="1086" width="72" height="84"/>
                    <path d="M3253 1110v8q0 5 5 5v14M3263 1110v8q0 5-5 5V1110M3275 1137v-27q-7 4-7 16h7" fill="none" stroke="#fff" stroke-width="3"/>
                    <text x="3222" y="1095" class="end">Springleaf Prata</text>
                    <text x="3222" y="1129" class="end">Place - Jln Tua Kong</text>
                    <text x="3222" y="1162" class="end small">Indian · $</text>
                </g>

                <!-- incident markers -->
                <g class="marker medium-marker">
                    <circle cx="2471" cy="632" r="72"/>
                    <use href="#warn" x="2442" y="606" width="58" height="52"/>
                </g>
                <g class="marker high-marker">
                    <circle cx="1026" cy="912" r="72"/>
                    <use href="#warn" x="990" y="882" width="72" height="60"/>
                </g>
            </svg>

            <ul class="events">
                <li>
                    <svg class="icon" aria-hidden="true"><use href="#clock-solid"/></svg>
                    <time>14:35 EST</time>
                    <span class="coords">42.331429, -83.045753</span>
                </li>
                <li>
                    <svg class="icon" aria-hidden="true"><use href="#clock-solid"/></svg>
                    <time>15:10 EST</time>
                    <span class="coords">42.331429, -83.045753</span>
                </li>
                <li>
                    <svg class="icon" aria-hidden="true"><use href="#clock-solid"/></svg>
                    <time>15:45 EST</time>
                    <span class="coords">42.331429, -83.045753</span>
                </li>
            </ul>
        </section>
    </main>
</body>
</html>
```
FILE: styles.css
```css
* {
    box-sizing: border-box;
}

body {
    margin: 0;
    background-color: #ffffff;
    font-family: "IBM Plex Sans", "Noto Sans", sans-serif;
    font-size: 28px;
    line-height: 40px;
    color: #64748b;
}

h1, h2, p, ul {
    margin: 0;
    padding: 0;
}

button {
    font: inherit;
    color: inherit;
    border: none;
    background: none;
    cursor: pointer;
}

.sprite {
    position: absolute;
    width: 0;
    height: 0;
}

.icon {
    width: 32px;
    height: 32px;
    flex: none;
}

/* the two panels share the middle column, so the trail overlaps the incidents */
.board {
    display: grid;
    grid-template-columns: 814fr 82fr 1287fr;
    align-items: start;
    padding: 2px 9px 16px 4px;
}

.panel {
    grid-row: 1;
    background-color: #ffffff;
    padding: 48px;
}

.incidents {
    grid-column: 1 / 3;
    border-radius: 26px;
    box-shadow: 0 0 2px rgba(0, 0, 0, 0.16);
}

.trail {
    grid-column: 2 / 4;
    margin-top: 330px;
    padding: 48px 50px 44px 48px;
    border-radius: 20px;
    box-shadow: 0 5px 6px rgba(0, 0, 0, 0.12);
}

/* incidents */
.incidents-header {
    display: flex;
    justify-content: space-between;
    align-items: center;
    height: 60px;
}

h1 {
    font-size: 40px;
    line-height: 60px;
    font-weight: 700;
    color: #1e293b;
}

.filter {
    display: flex;
    align-items: center;
    gap: 16px;
    padding: 0 0 4px;
    font-size: 32px;
}

.tabs {
    display: flex;
    gap: 16px;
    margin: 44px 0 48px;
}

.tab {
    height: 72px;
    padding: 0 32px;
    border: 1px solid #f1f5f9;
    border-radius: 16px;
    background-color: #f1f5f9;
}

.tab.active {
    border-color: #2563eb;
    background-color: #2563eb;
    color: #ffffff;
}

.incident-list {
    display: flex;
    flex-direction: column;
    gap: 32px;
}

.incident {
    display: flex;
    flex-direction: column;
    gap: 16px;
    padding: 32px;
    border: 2px solid #e2e8f0;
    border-radius: 16px;
}

.incident-top {
    display: flex;
    align-items: center;
    gap: 16px;
    height: 48px;
}

.incident h2 {
    flex: 1;
    font-size: 32px;
    font-weight: 500;
    color: #1e293b;
}

.warn {
    width: 40px;
    height: 32px;
}

.warn-mark {
    fill: var(--mark, #ffffff);
}

.high-icon {
    color: #e53935;
}

.medium-icon {
    color: #d97706;
}

.badge {
    padding: 1px 16px 0 17px;
    border-radius: 24px;
    font-size: 24px;
    line-height: 47px;
}

.badge.high {
    background-color: #fae5e1;
    color: #e03a34;
}

.badge.medium {
    background-color: #fef0c3;
    color: #d97720;
}

.meta {
    display: flex;
    gap: 32px;
}

.meta span {
    display: flex;
    align-items: center;
    gap: 8px;
}

/* trail */
.trail-header {
    display: flex;
    justify-content: space-between;
    align-items: center;
    height: 48px;
    margin-bottom: 32px;
}

.trail-header h2 {
    font-size: 32px;
    font-weight: 600;
    color: #0f172a;
}

.trail-header a {
    color: #1e40af;
    font-weight: 500;
    text-decoration: none;
}

.events {
    display: flex;
    flex-direction: column;
    gap: 24px;
    margin-top: 32px;
    list-style: none;
}

.events li {
    display: flex;
    align-items: center;
    gap: 16px;
}

.events .icon {
    color: #9ca3af;
}

.events time {
    flex: 1;
    color: #4b5563;
}

.coords {
    color: #0f172a;
}

/* map */
.map {
    display: block;
    width: 100%;
    border-radius: 16px;
    background-color: #f9f8f8;
    font-family: Roboto, sans-serif;
}

.map text {
    dominant-baseline: central;
    paint-order: stroke;
    stroke: #ffffff;
    stroke-width: 5px;
    stroke-opacity: 0.8;
    stroke-linejoin: round;
}

.park {
    fill: #cdeeda;
}

.ground {
    fill: #f9f8f8;
}

.trail-line {
    fill: none;
    stroke: #a9b3c2;
    stroke-width: 4;
}

.building {
    fill: #e6e8ec;
    stroke: #d6dae4;
    stroke-width: 3;
}

.shop {
    fill: #fcf5ee;
    stroke: #fbdcd4;
    stroke-width: 3;
}

.lane, .drive, .street, .avenue, .main-road, .boundary {
    fill: none;
    stroke: #c2cad9;
    stroke-linecap: round;
    stroke-linejoin: round;
}

.lane {
    stroke: #cbd4df;
    stroke-width: 10;
}

.drive {
    stroke: #c3ccd8;
    stroke-width: 23;
}

.street {
    stroke-width: 22;
}

.avenue {
    stroke: #c7d0da;
    stroke-width: 96;
}

.main-road {
    stroke: #c7d0da;
    stroke-width: 38;
}

.boundary {
    stroke: #91a5af;
    stroke-width: 3;
}

.street-name {
    font-size: 31px;
    font-weight: 500;
    text-anchor: middle;
    fill: #536277;
}

.street-name.major {
    fill: #3f4c5f;
}

.house-no {
    font-size: 26px;
    text-anchor: middle;
    fill: #56657a;
}

.poi {
    font-size: 34px;
    color: #7b8a9c;
    fill: #586980;
}

.poi .end {
    text-anchor: end;
}

.poi .small {
    font-size: 27px;
}

.poi.dark {
    fill: #3d4a5e;
}

.poi.food {
    color: #e0824f;
    fill: #dd6a26;
}

.marker {
    color: #ffffff;
}

.medium-marker {
    --mark: #eab308;
    fill: #eab308;
}

.high-marker {
    --mark: #e53935;
    fill: #e53935;
}
```
